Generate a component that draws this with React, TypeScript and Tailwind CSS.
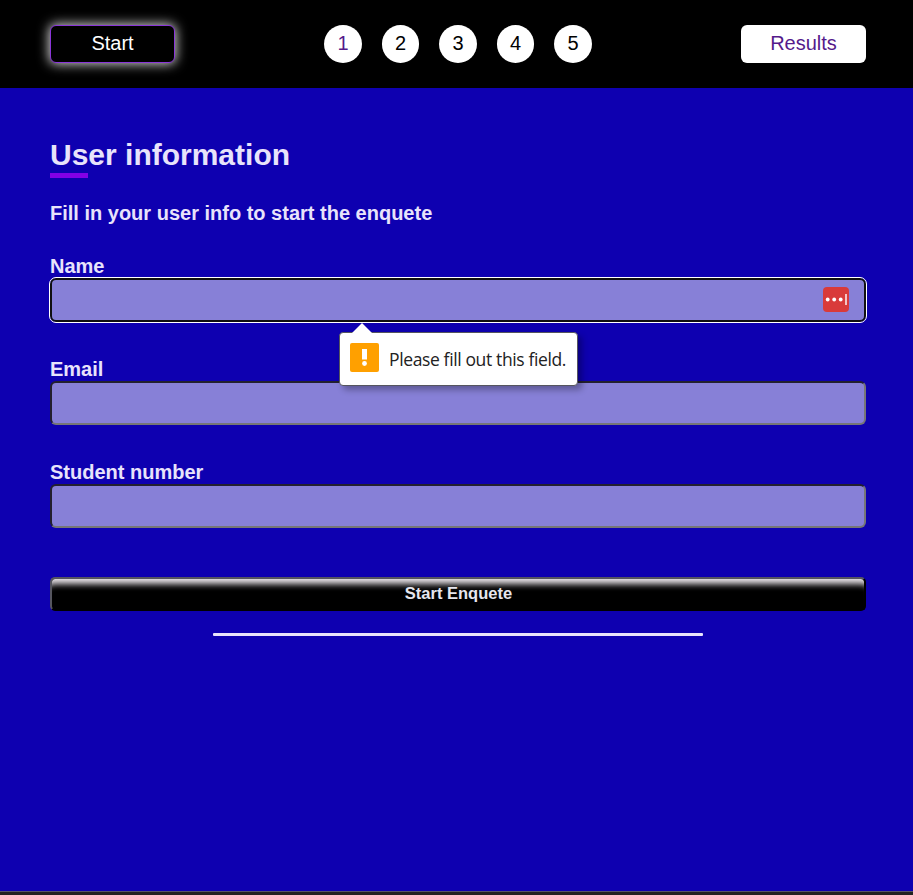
const questions = [1, 2, 3, 4, 5];

function Header() {
  return (
    <header className="flex h-[88px] items-center justify-between bg-black pr-[47px] pl-[50px] text-[20px] leading-[23px]">
      <a className="flex h-[38px] w-[125px] justify-center rounded-[6px] border border-[#8a35d8] bg-black pt-[6px] text-white shadow-[0_0_12px_1px_rgba(255,255,255,0.85)]">
        Start
      </a>
      <nav className="flex gap-5">
        {questions.map((n) => (
          <a
            key={n}
            className={`flex h-[38px] w-[37.5px] justify-center rounded-full bg-white pt-[7px] ${n === 1 ? "text-[#551a8b]" : "text-black"}`}
          >
            {n}
          </a>
        ))}
      </nav>
      <a className="flex h-[38px] w-[125px] justify-center rounded-[6px] bg-white pt-[7px] text-[#551a8b]">
        Results
      </a>
    </header>
  );
}

function ValidationTip() {
  return (
    <div className="absolute top-[54px] left-[289px] z-10 flex h-[54px] w-[239px] items-center rounded-[4px] border border-[#55555f] bg-white pl-[10px] shadow-[4px_4px_6px_rgba(0,0,0,0.3)]">
      <svg className="absolute -top-[11px] left-[11px]" width="22" height="12" viewBox="0 0 22 12">
        <path d="M1 11 L11 1 L21 11 V12 H1 Z" fill="#fff" />
      </svg>
      <svg className="-mt-[3px] shrink-0" width="29" height="29" viewBox="0 0 29 29">
        <rect width="29" height="29" rx="2" fill="#ffa000" />
        <rect x="12" y="6" width="5" height="10.5" fill="#fff" />
        <circle cx="14.5" cy="20.5" r="2.4" fill="#fff" />
      </svg>
      <span className="ml-[10px] whitespace-nowrap font-['Open_Sans','Noto_Sans',sans-serif] text-[17.5px] leading-6 font-normal tracking-[-0.37px] text-[#222222]">
        Please fill out this field.
      </span>
    </div>
  );
}

function Field({ label, focused = false }: { label: string; focused?: boolean }) {
  return (
    <div className="mb-[36px] h-[67px]">
      <label className="block h-[23px] text-[20px] leading-[23px] font-bold">{label}</label>
      <div className="relative">
        <div
          className={`flex h-[44px] items-center justify-end rounded-[6px] border-2 bg-[#8780d7] pr-[15px] ${
            focused
              ? "border-[#101010] outline outline-white"
              : "border-t-[#23202f] border-r-[#767676] border-b-[#767676] border-l-[#23202f]"
          }`}
        >
          {focused && (
            <svg className="-mt-[1px]" width="26" height="25" viewBox="0 0 26 25">
              <rect width="26" height="25" rx="4" fill="#d93a3a" />
              <g fill="#fff">
                <circle cx="4.7" cy="12.5" r="1.9" />
                <circle cx="11.2" cy="12.5" r="1.9" />
                <circle cx="17.7" cy="12.5" r="1.9" />
                <rect x="22.3" y="7" width="1.4" height="11" />
              </g>
            </svg>
          )}
        </div>
        {focused && <ValidationTip />}
      </div>
    </div>
  );
}

export default function App() {
  return (
    <div className="flex h-[895px] w-full flex-col bg-[#0e00b0] font-['Liberation_Sans',Arial,sans-serif] text-[#e8e3fb]">
      <Header />
      <main className="flex flex-1 flex-col pt-[49px] pr-[47px] pl-[50px]">
        <h1 className="h-[36px] text-[30px] leading-[35px] font-bold">User information</h1>
        <div className="h-[5px] w-[38px] bg-[#8400e6]" />
        <h2 className="mt-[24px] mb-[30px] h-[23px] text-[20px] leading-[23px] font-bold">
          Fill in your user info to start the enquete
        </h2>
        <form>
          <Field label="Name" focused />
          <Field label="Email" />
          <Field label="Student number" />
          <button
            type="button"
            className="mt-[49px] block h-[34px] w-full rounded-[5px] border-2 border-t-[#55555f] border-r-black border-b-black border-l-[#55555f] bg-black pb-[2px] pl-[1px] text-[16.5px] leading-[18px] font-bold text-[#e6e6ee] shadow-[inset_0_12px_6px_-7px_#e8e3e8]"
          >
            Start Enquete
          </button>
        </form>
        <div className="mt-[22px] h-[3px] w-[490px] self-center rounded-[1px] bg-[#e8e3fb]" />
      </main>
      <footer className="h-[4px] border-t border-[#55556a] bg-[#222222]" />
    </div>
  );
}
